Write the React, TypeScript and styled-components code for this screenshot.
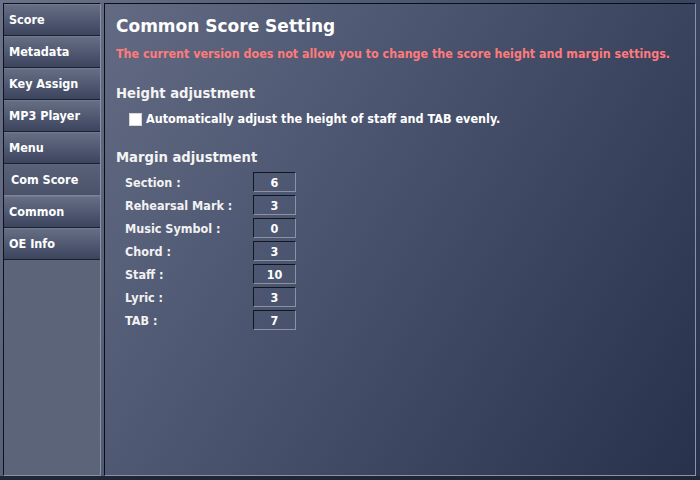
import React from 'react';
import styled, { createGlobalStyle } from 'styled-components';

const GlobalStyle = createGlobalStyle`
  html, body {
    margin: 0;
    padding: 0;
    background: #1e2638;
  }
  body {
    font-family: "DejaVu Sans Condensed", "DejaVu Sans", sans-serif;
    color: #ffffff;
  }
`;

const tabs = ['Score', 'Metadata', 'Key Assign', 'MP3 Player', 'Menu', 'Com Score', 'Common', 'OE Info'];

const margins: Array<{ label: string; value: number }> = [
  { label: 'Section :', value: 6 },
  { label: 'Rehearsal Mark :', value: 3 },
  { label: 'Music Symbol :', value: 0 },
  { label: 'Chord :', value: 3 },
  { label: 'Staff :', value: 10 },
  { label: 'Lyric :', value: 3 },
  { label: 'TAB :', value: 7 },
];

export default function App() {
  return (
    <Page>
      <GlobalStyle />
      <Stage>
        <Sidebar>
          {tabs.map((t) => (
            <Tab key={t} $active={t === 'Com Score'}>{t}</Tab>
          ))}
        </Sidebar>
        <Panel>
          <Title>Common Score Setting</Title>
          <Warning>The current version does not allow you to change the score height and margin settings.</Warning>
          <Heading $top={22}>Height adjustment</Heading>
          <CheckRow>
            <CheckBox />
            <span>Automatically adjust the height of staff and TAB evenly.</span>
          </CheckRow>
          <Heading $top={21}>Margin adjustment</Heading>
          <MarginList>
            {margins.map((m) => (
              <MarginRow key={m.label}>
                <MarginLabel>{m.label}</MarginLabel>
                <ValueBox>{m.value}</ValueBox>
              </MarginRow>
            ))}
          </MarginList>
        </Panel>
      </Stage>
    </Page>
  );
}

const Page = styled.div`
  width: 700px;
  height: 480px;
  background: #1e2638;
  overflow: hidden;
`;

const Stage = styled.div`
  height: 476px;
  box-sizing: border-box;
  padding: 3px 4px 0 3px;
  display: flex;
  gap: 3px;
  background: linear-gradient(120deg, #6a7289 0%, #4c5570 45%, #28314c 100%);
`;

const Sidebar = styled.div`
  width: 98px;
  box-sizing: border-box;
  display: flex;
  flex-direction: column;
  border-left: 1px solid #0e121a;
  border-top: 1px solid #0e121a;
  border-right: 1px solid #8a91a4;
  border-bottom: 1px solid #8a91a4;
  background: linear-gradient(180deg, #5d657c 0%, #5c6479 100%);
`;

const Tab = styled.div<{ $active?: boolean }>`
  height: 32px;
  box-sizing: border-box;
  display: flex;
  align-items: center;
  padding: 0 0 2px ${(p) => (p.$active ? 7 : 5)}px;
  font-size: 12.5px;
  font-weight: bold;
  color: #ffffff;
  white-space: nowrap;
  border-top: 1px solid ${(p) => (p.$active ? '#5c6478' : '#737a8f')};
  border-bottom: 1px solid ${(p) => (p.$active ? '#7c8397' : '#1b2030')};
  background: ${(p) =>
    p.$active
      ? 'linear-gradient(180deg, #59617a 0%, #4a5269 100%)'
      : 'linear-gradient(180deg, #666e85 0%, #3c455e 100%)'};
`;

const Panel = styled.div`
  flex: 1;
  min-width: 0;
  box-sizing: border-box;
  border-left: 1px solid #0a0d14;
  border-top: 1px solid #0a0d14;
  border-right: 1px solid #8d93a6;
  border-bottom: 1px solid #8d93a6;
  padding: 11px 0 0 11px;
  display: flex;
  flex-direction: column;
`;

const Title = styled.div`
  font-family: "DejaVu Sans", sans-serif;
  font-size: 17px;
  font-weight: bold;
  line-height: 22px;
`;

const Warning = styled.div`
  margin-top: 9px;
  font-size: 12.4px;
  font-weight: bold;
  line-height: 16px;
  white-space: nowrap;
  color: #ff7b7b;
`;

const Heading = styled.div<{ $top: number }>`
  margin-top: ${(p) => p.$top}px;
  font-family: "DejaVu Sans", sans-serif;
  font-size: 13.2px;
  font-weight: bold;
  line-height: 20px;
  color: #f4f4f4;
`;

const CheckRow = styled.div`
  margin-top: 7px;
  padding-left: 13px;
  display: flex;
  align-items: center;
  gap: 4px;
  font-size: 12.5px;
  font-weight: bold;
  line-height: 16px;
`;

const CheckBox = styled.span`
  width: 13px;
  height: 13px;
  box-sizing: border-box;
  background: #ffffff;
  border: 1px solid #d8d8d8;
`;

const MarginList = styled.div`
  margin-top: 4px;
  padding-left: 9px;
  display: flex;
  flex-direction: column;
  gap: 3px;
`;

const MarginRow = styled.div`
  display: flex;
  align-items: center;
  height: 20px;
`;

const MarginLabel = styled.div`
  width: 128px;
  font-size: 12.5px;
  font-weight: bold;
  color: #f2f2f2;
`;

const ValueBox = styled.div`
  width: 43px;
  height: 20px;
  box-sizing: border-box;
  display: flex;
  align-items: center;
  justify-content: center;
  font-size: 12.5px;
  font-weight: bold;
  border-top: 1px solid #12161f;
  border-left: 1px solid #12161f;
  border-right: 1px solid #8c92a3;
  border-bottom: 1px solid #8c92a3;
`;
